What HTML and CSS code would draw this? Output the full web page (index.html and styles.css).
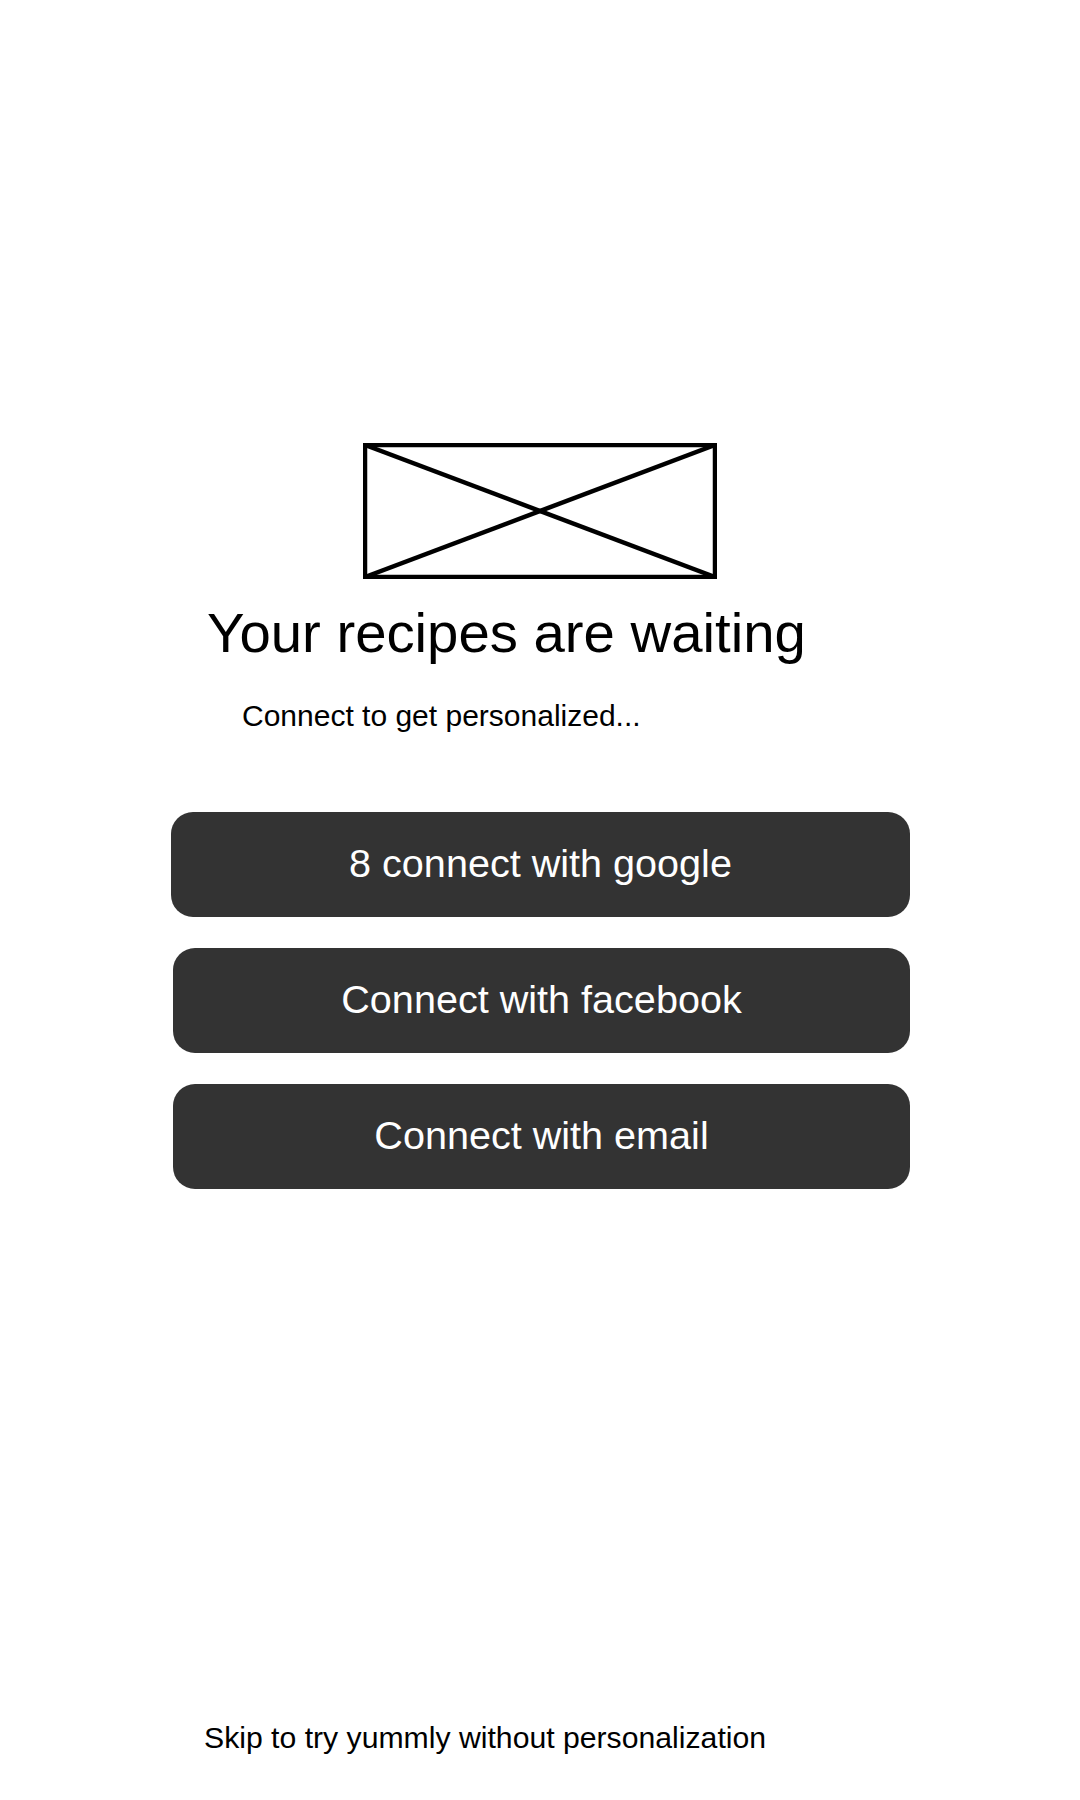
FILE: index.html
```html
<!DOCTYPE html>
<html lang="en">
<head>
<meta charset="utf-8">
<title>Your recipes are waiting</title>
<link rel="stylesheet" href="styles.css">
</head>
<body>
<main class="screen">
  <div class="logo">
    <svg width="354" height="136" viewBox="0 0 354 136" aria-hidden="true">
      <rect x="2" y="2" width="350" height="132" fill="none" stroke="#000" stroke-width="4.5"/>
      <line x1="2" y1="2" x2="352" y2="134" stroke="#000" stroke-width="4.5"/>
      <line x1="352" y1="2" x2="2" y2="134" stroke="#000" stroke-width="4.5"/>
    </svg>
  </div>
  <h1 class="title">Your recipes are waiting</h1>
  <p class="subtitle">Connect to get personalized...</p>
  <div class="actions">
    <button class="btn btn-google">8 connect with google</button>
    <button class="btn">Connect with facebook</button>
    <button class="btn">Connect with email</button>
  </div>
  <p class="skip">Skip to try yummly without personalization</p>
</main>
</body>
</html>
```

FILE: styles.css
```css
html, body {
  margin: 0;
  padding: 0;
  background: #ffffff;
}

body {
  font-family: "Liberation Sans", Arial, sans-serif;
  color: #000000;
}

.screen {
  width: 1080px;
  height: 1800px;
  display: flex;
  flex-direction: column;
  box-sizing: border-box;
}

.logo {
  margin: 443px 0 0 363px;
  width: 354px;
  height: 136px;
  line-height: 0;
}

.logo svg {
  display: block;
}

.title {
  margin: 22px 0 0 207px;
  font-size: 56.3px;
  font-weight: 400;
  line-height: 64px;
}

.subtitle {
  margin: 33px 0 0 242px;
  font-size: 30px;
  line-height: 36px;
}

.actions {
  margin-top: 78px;
  display: flex;
  flex-direction: column;
  gap: 31px;
}

.btn {
  margin-left: 173px;
  width: 737px;
  height: 105px;
  border: 0;
  border-radius: 22px;
  background: #333333;
  color: #ffffff;
  font-family: "Liberation Sans", Arial, sans-serif;
  font-size: 39.6px;
  line-height: 46px;
  display: flex;
  align-items: center;
  justify-content: center;
  padding: 0 0 4px;
  box-sizing: border-box;
}

.btn-google {
  margin-left: 171px;
  width: 739px;
}

.skip {
  margin: 531px 0 0 204px;
  font-size: 30.2px;
  line-height: 36px;
}
```
